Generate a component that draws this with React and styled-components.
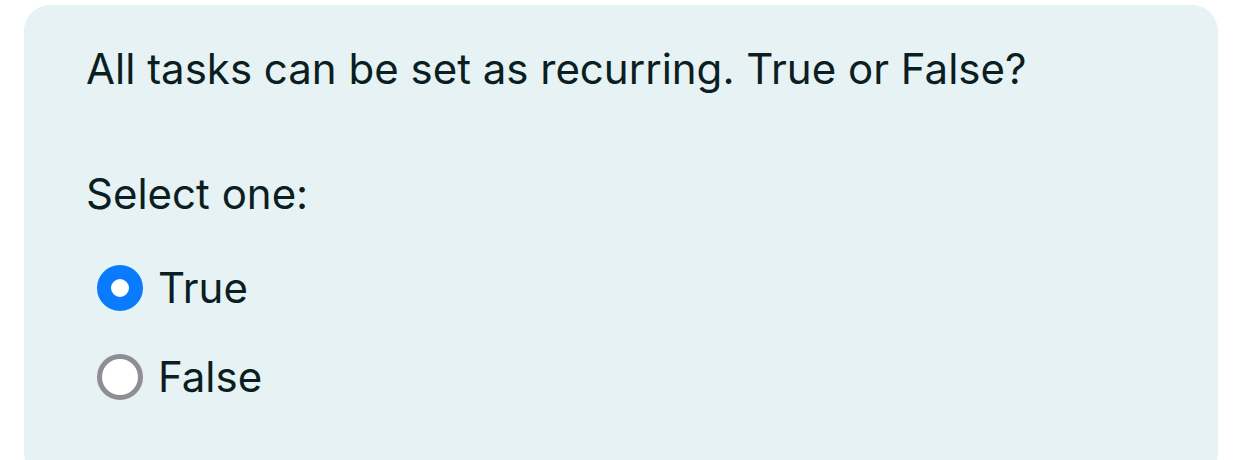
import { createGlobalStyle, styled } from 'styled-components'

const GlobalStyle = createGlobalStyle`
    body{
        margin: 0;
        background: #fff;
        font-family: Inter, "Noto Sans", sans-serif;
    }
`

const Page = styled.main`
    width: 1242px;
    height: 460px;
    overflow: hidden;
    padding: 5px 24px 0;
    box-sizing: border-box;
`

const Card = styled.section`
    height: 474px;
    padding: 34px 62px 0;
    box-sizing: border-box;

    background-color: #E6F2F4;
    border-radius: 26px;
    color: #0B1E22;
`

const Question = styled.p`
    margin: 0;
    font-size: 42px;
    line-height: 60px;
`

const Prompt = styled.p`
    margin: 65px 0 34px;
    font-size: 42px;
    line-height: 60px;
`

const Options = styled.div`
    display: flex;
    flex-direction: column;
    gap: 29px;
    padding-left: 11px;
`

const Option = styled.label`
    display: flex;
    align-items: center;
    gap: 15px;
    font-size: 42px;
    line-height: 60px;
`

const Radio = styled.span`
    width: 46px;
    height: 46px;
    box-sizing: border-box;
    border-radius: 50%;
    background: #fff;
    border: ${({ $checked }) => $checked ? '14px solid #0A7AFF' : '5px solid #8E8E93'};
`

export default function App(){
    return(
        <Page>
            <GlobalStyle/>
            <Card>
                <Question>All tasks can be set as recurring. True or False?</Question>
                <Prompt>Select one:</Prompt>
                <Options>
                    <Option><Radio $checked/>True</Option>
                    <Option><Radio/>False</Option>
                </Options>
            </Card>
        </Page>
    )
}
